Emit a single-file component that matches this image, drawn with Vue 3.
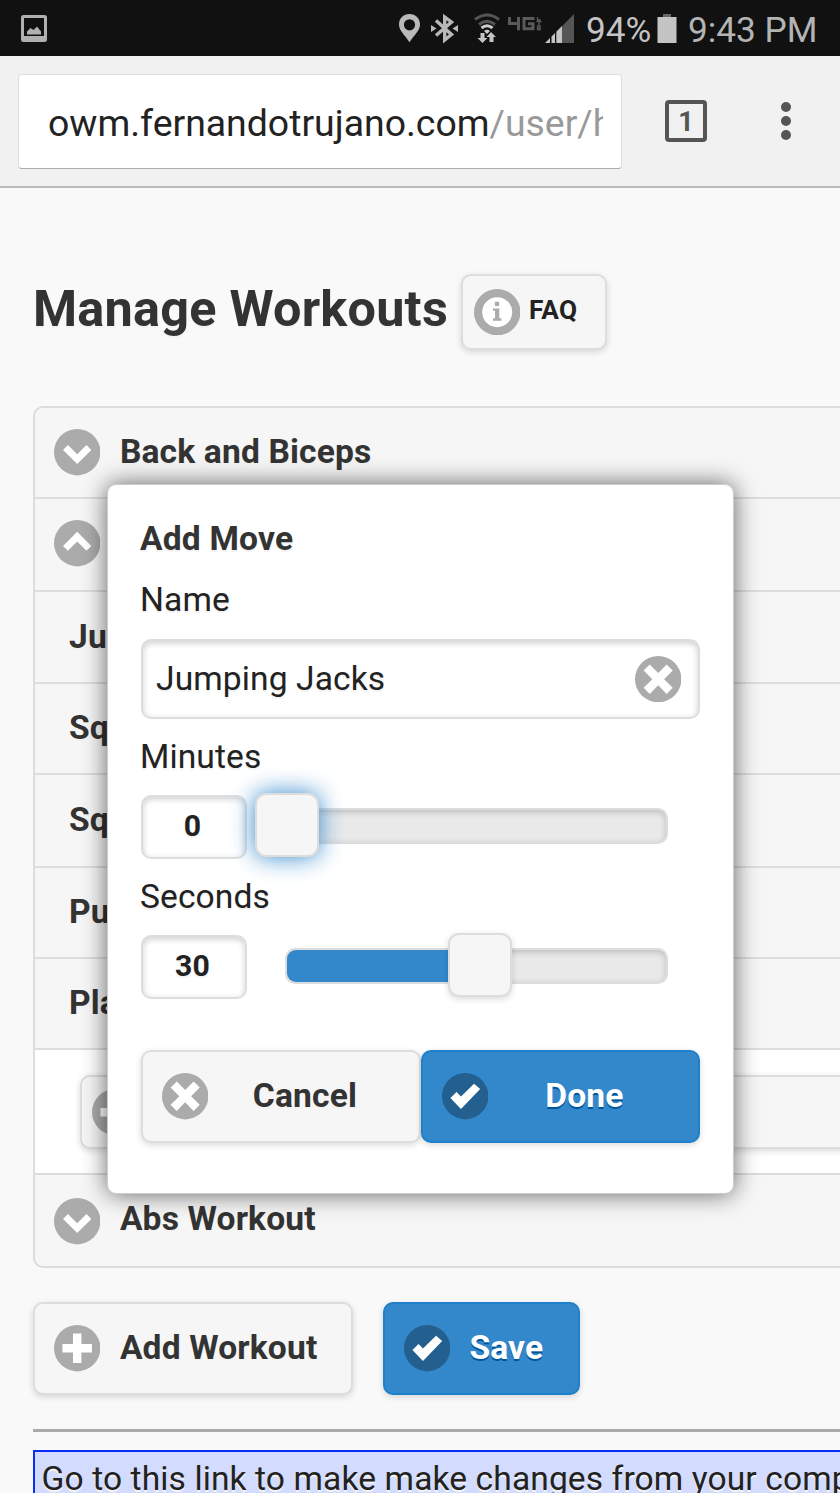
<script setup>
import { h } from 'vue'

const shapes = {
  down: 'M4.3 9.900 6.600 7.600 11 12 15.400 7.600 17.700 9.900 11 16.600Z',
  up: 'M4.3 12.300 6.600 14.600 11 10.200 15.400 14.600 17.700 12.300 11 5.600Z',
  close: 'M17.9 6.9 15 4 11 8.1 7 4 4.1 6.9 8.2 11 4.1 15.1 7 18 11 13.9 15 18 17.9 15.1 13.8 11Z',
  check: 'M18.1 7.6 15.2 5.1 9 11.2 6.9 9 4 11.9 9 17.1Z',
  plus: 'M18 9H13V4H9V9H4V13H9V18H13V13H18Z'
}

const Disc = (props) =>
  h('svg', { class: 'disc', viewBox: '0 0 22 22' }, [
    h('circle', { cx: 11, cy: 11, r: 11, fill: props.dark ? '#24608f' : '#ababab' }),
    h('path', { d: shapes[props.name], fill: '#fff' })
  ])
Disc.props = { name: String, dark: Boolean }

const moves = [
  { name: 'Jumping Jacks', size: 'm' },
  { name: 'Squats', size: 's' },
  { name: 'Squats', size: 'l' },
  { name: 'Pushups', size: 's' },
  { name: 'Plank', size: 's' }
]
</script>

<template>
  <div class="screen">
    <header class="status">
      <svg class="pic" viewBox="0 0 26 27"><rect x="1.5" y="1.5" width="23" height="24" rx="1" fill="none" stroke="#b0b0b0" stroke-width="3" /><path d="M1 20.500h24v5H1z" fill="#b0b0b0" /><path d="M3 20h20v1H3z" fill="#111" /><path d="M6 19.500v-3l3.500-3.500 3 2 3.500-3.500 4 5v3z" fill="#b0b0b0" /></svg>
      <svg class="tray" viewBox="0 0 190 56">
        <path fill-rule="evenodd" fill="#b9b9b9" d="M19.500 14C13.300 14 9 18.600 9 24.500 9 31 15 35 19.500 42.200 24 35 30 31 30 24.500 30 18.600 25.700 14 19.500 14Zm0 5.200a5.600 5.600 0 1 1 0 11.200 5.600 5.600 0 0 1 0-11.200Z" />
        <path d="M46 20.500 61.500 34.500 54.700 40V17L61.500 22 46 35.500" fill="none" stroke="#b9b9b9" stroke-width="3.400" />
        <path d="M41 25 46.500 28.500 41 32ZM68 25 62.500 28.500 68 32Z" fill="#b9b9b9" />
        <path d="M85 19.500Q97 10.500 109 19.500M89 24.500Q97 18 105 24.500" fill="none" stroke="#555" stroke-width="3" />
        <path d="M91.500 28Q97 23.500 102.500 28" fill="none" stroke="#ccc" stroke-width="3" />
        <path d="M94 31Q97 28.500 100 31L97 34Z" fill="#ccc" />
        <path d="M90.500 33h4v5h3L92.500 43 87.500 38h3ZM99.500 42V37h-3L101 32 106 37h-2.500v5Z" fill="#c4c4c4" />
        <path d="M119.500 17v6.500h10.500M128.500 17v13.300M144.500 18.500h-10.500v10.200h9v-5h-5" fill="none" stroke="#5a5a5a" stroke-width="3" />
        <path d="M147.500 17v3h3M146.500 21.500h5M149 21.500v3.500M151 26h-3.500v3.500h3.500M147.500 27.800h3.500" fill="none" stroke="#5a5a5a" stroke-width="1.300" />
        <path d="M166 43V32.500L184 14V43Z" fill="#555" />
        <path d="M155 43 160 38V43ZM161.500 43V36.500L165 33V43ZM166.500 43V31.500L172 26V43Z" fill="#c4c4c4" />
      </svg>
      <span class="pct">94%</span>
      <svg class="batt" viewBox="0 0 20 29"><path d="M6 0h8v3H6z" fill="#666" /><path d="M.5 3h19v26H.5z" fill="#c4c4c4" /></svg>
      <span class="clock">9:43 PM</span>
    </header>

    <nav class="browser">
      <div class="url"><div class="address">owm.fernandotrujano.com<span>/user/home</span></div></div>
      <div class="tabs">1</div>
      <div class="menu"><i></i><i></i><i></i></div>
    </nav>

    <main>
      <div class="heading">
        <h1>Manage Workouts</h1>
        <button class="btn faq">
          <svg class="disc" viewBox="0 0 22 22"><circle cx="11" cy="11" r="11" fill="#ababab" /><circle cx="11" cy="11" r="7.100" fill="#fff" /><path d="M9.900 6.100h2v2h-2zM9 9.200h3v4.700h1v1.100H9v-1.100h1v-3.600H9z" fill="#ababab" /></svg>
          <span>FAQ</span>
        </button>
      </div>

      <section class="list">
        <div class="row s"><Disc name="down" /><span>Back and Biceps</span></div>
        <div class="row l open"><Disc name="up" /></div>
        <div v-for="(m, i) in moves" :key="i" class="row move" :class="m.size"><span>{{ m.name }}</span></div>
        <div class="panel"><div class="addmove"><Disc name="plus" /></div></div>
        <div class="row last"><Disc name="down" /><span>Abs Workout</span></div>
      </section>

      <div class="actions">
        <button class="btn add"><Disc name="plus" /><span>Add Workout</span></button>
        <button class="btn blue save"><Disc name="check" dark /><span>Save</span></button>
      </div>

      <div class="rule"></div>
      <div class="note">Go to this link to make make changes from your computer</div>
    </main>

    <div class="popup">
      <h2>Add Move</h2>
      <label class="l-name">Name</label>
      <div class="field"><span>Jumping Jacks</span><Disc name="close" /></div>
      <label class="l-min">Minutes</label>
      <div class="slider">
        <div class="num">0</div>
        <div class="track"><div class="handle focus start"></div></div>
      </div>
      <label class="l-sec">Seconds</label>
      <div class="slider">
        <div class="num">30</div>
        <div class="track"><div class="fill"></div><div class="handle mid"></div></div>
      </div>
      <div class="choices">
        <button class="btn"><Disc name="close" /><span>Cancel</span></button>
        <button class="btn blue"><Disc name="check" dark /><span>Done</span></button>
      </div>
    </div>
  </div>
</template>

<style>
html, body { margin: 0; background: #f9f9f9; overflow: hidden; }
</style>

<style scoped>
* { box-sizing: border-box; }
.screen { position: relative; width: 840px; height: 1493px; overflow: hidden; background: #f9f9f9; font-family: Roboto, "Liberation Sans", sans-serif; font-size: 33.6px; letter-spacing: .1px; color: #222; white-space: nowrap; text-shadow: 0 2px 0 #f3f3f3; }
.status { height: 56px; background: #111; display: flex; color: #b4b4b4; text-shadow: none; font-size: 35.200px; letter-spacing: 0; line-height: 61px; }
.pic { width: 26px; height: 27px; margin: 15px 0 0 21px; }
.tray { width: 190px; height: 56px; margin-left: 343px; }
.pct { width: 71px; margin-left: 6px; color: #c4c4c4; }
.batt { width: 20px; height: 29px; margin: 14px 0 0 0; }
.clock { margin-left: 11px; }
.browser { height: 132px; background: #f1f1f1; border-bottom: 2px solid #bcbcbc; display: flex; align-items: flex-start; text-shadow: none; }
.url { margin: 18px 0 0 18px; width: 604px; height: 95px; background: #fff; border: 1px solid #ddd; border-bottom-color: #aaa; border-radius: 4px; padding: 0 18px 0 29px; }
.address { overflow: hidden; font-size: 37.4px; letter-spacing: 0; line-height: 97px; height: 93px; color: #222; }
.address span { color: #999; }
.tabs { width: 42px; height: 42px; margin: 44px 0 0 43px; border: 4px solid #555; border-radius: 4px; font: 700 27px/37px Roboto, sans-serif; text-align: center; color: #555; }
.menu { margin: 46px 0 0 74px; display: grid; gap: 4px; }
.menu i { width: 10px; height: 10px; border-radius: 50%; background: #555; }
main { padding: 86px 0 0 33px; }
.disc { width: 46.400px; height: 46.400px; flex: none; display: block; }
.heading { display: flex; height: 132px; }
h1 { margin: 8px 0 0; width: 428px; font-size: 50.4px; line-height: 54px; letter-spacing: .23px; color: #333; font-weight: 700; }
.btn { margin: 0; padding: 0 0 0 19px; display: flex; align-items: center; background: #f6f6f6; border: 2px solid #ddd; border-radius: 10px; font: 700 33.6px/40px Roboto, sans-serif; letter-spacing: .15px; color: #333; text-shadow: 0 2px 0 #f3f3f3; box-shadow: 0 2px 6px rgba(0,0,0,.15); }
.btn span { position: relative; top: -1px; }
.faq { width: 146px; height: 76px; padding-left: 10.500px; font-size: 26.200px; letter-spacing: .4px; color: #222; }
.faq span { margin-left: 9px; top: -2px; }
.blue { background: #38c; border-color: #1c80cb; color: #fff; text-shadow: 0 2px 0 #059; }
.list { width: 860px; height: 862px; border: 2px solid #ddd; border-radius: 10px; background: #f6f6f6; overflow: hidden; }
.row { height: 91px; border-bottom: 2px solid #ddd; padding-left: 19px; display: flex; align-items: center; font-weight: 700; letter-spacing: .15px; color: #333; gap: 19.500px; }
.row span { position: relative; top: -1px; }
.row.m { height: 92px; }
.row.l { height: 93px; }
.open .disc { position: relative; top: -1px; }
.move { padding-left: 34px; }
.panel { height: 125px; background: #fff; border-bottom: 2px solid #ddd; padding: 25px 0 0 45px; }
.addmove { height: 74px; width: 860px; border: 2px solid #ddd; border-radius: 10px; background: #f6f6f6; padding: 12px 0 0 10px; box-shadow: 0 2px 6px rgba(0,0,0,.15); }
.last { border: 0; height: 91px; align-items: center; }
.last .disc { position: relative; top: 1px; }
.last span { top: -2px; }
.actions { display: flex; margin-top: 34px; height: 93px; gap: 30px; }
.add { width: 319.500px; }
.save { width: 197px; }
.add span, .save span { margin-left: 19.500px; }
.rule { margin-top: 34px; height: 3px; background: #aaa; width: 820px; }
.note { margin-top: 18px; width: 820px; height: 80px; border: 2px solid #0a2cf5; background: #d3dcff; padding-left: 6.500px; line-height: 54px; }
.popup { position: absolute; left: 107px; top: 484px; width: 627px; height: 710px; border: 1px solid #ccc; border-radius: 9px; background: #fff; padding: 34px 33px; box-shadow: 0 0 25px rgba(0,0,0,.6); display: flex; flex-direction: column; }
h2 { margin: 0 0 0 -1px; font-size: 33.6px; line-height: 40px; font-weight: 700; letter-spacing: .2px; color: #333; }
label { line-height: 40px; margin-left: -1px; }
.l-name { margin-top: 21px; }
.field { margin-top: 19px; height: 80px; flex: none; border: 2px solid #ddd; border-radius: 10px; box-shadow: inset 0 2px 6px rgba(0,0,0,.2); display: flex; align-items: center; justify-content: space-between; padding: 0 17px 0 13px; }
.field span { position: relative; top: -1px; }
.l-min { margin-top: 18px; }
.slider { height: 63px; margin-top: 18px; margin-bottom: 1px; display: flex; align-items: center; }
.num { width: 106px; height: 64px; border: 2px solid #ddd; border-radius: 10px; box-shadow: inset 0 2px 6px rgba(0,0,0,.2); font-size: 30.200px; line-height: 57px; text-align: center; font-weight: 700; padding-right: 3px; }
.track { position: relative; margin-left: 38px; width: 383px; height: 36px; margin-top: -2px; background: #e9e9e9; border: 2px solid #ddd; border-radius: 10px; box-shadow: inset 0 2px 6px rgba(0,0,0,.2); }
.handle { position: absolute; top: -17px; width: 64px; height: 64px; border: 2px solid #ddd; border-radius: 11px; background: #f6f6f6; box-shadow: 0 2px 6px rgba(0,0,0,.15); }
.start { left: -32px; }
.mid { left: 161px; }
.focus { box-shadow: 0 0 25px #38c; }
.fill { width: 163px; height: 32px; background: #38c; border-radius: 9px 0 0 9px; }
.l-sec { margin-top: 18px; }
.choices { display: flex; margin-top: 51px; height: 93px; flex: none; }
.choices .btn { width: 279.500px; flex: none; }
.choices .btn span { flex: 1; text-align: center; padding-right: 17px; }
</style>
